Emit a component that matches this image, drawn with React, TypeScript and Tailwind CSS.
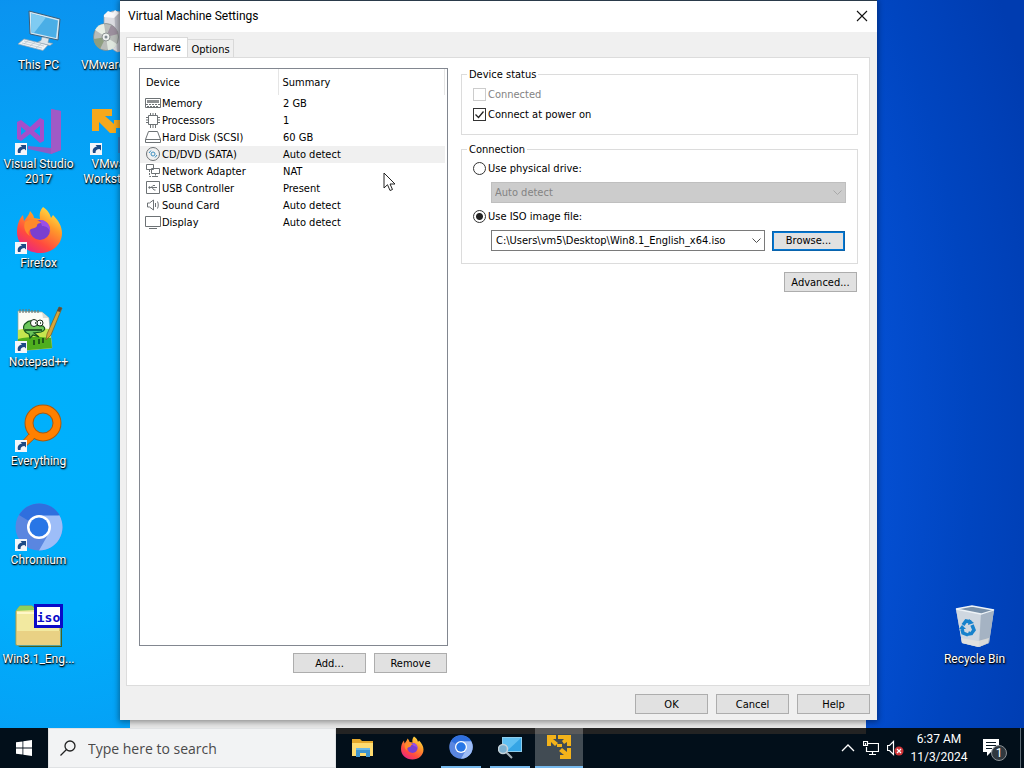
import { useState, type ReactNode } from "react";
import { clsx } from "clsx";

const ISO_PATH = "C:\\Users\\vm5\\Desktop\\Win8.1_English_x64.iso";

/* ---------- desktop and taskbar icons ---------- */

function Shortcut() {
  return (
    <g>
      <path d="M0 36h12v12H0z" fill="#f4f6fa" />
      <path d="M3 46c-1-4 1-6 4-6.500l-1.500-1.500H11v5.500L9.500 42C7 42 5.500 43 5.500 46z" fill="#1d4a86" />
    </g>
  );
}

function ThisPcIcon() {
  return (
    <svg viewBox="0 0 48 48" className="size-12">
      <path d="M14 3l31 8-2 21-28-6z" fill="#d6e8f2" />
      <path d="M14 3l31 8-2 21-28-6z" fill="none" stroke="#3c5d78" />
      <path d="M16 5.500l27 7-2 17.500-24.500-5.500z" fill="#4aaee6" />
      <path d="M16 5.500l15 4-12 15.500-2.500-.5z" fill="#7fcbf2" />
      <path d="M27 29l7 1.500-1 4 5 1-3 2-13-3 4-2z" fill="#dce6ec" stroke="#8295a3" strokeWidth=".6" />
      <path d="M9 31l24 6-5 5.500L3 36z" fill="#eef3f6" stroke="#93a5b1" strokeWidth=".7" />
      <path d="M9 33l20 5M7 35l20 5M14 32l-5 4M20 34l-5 4M26 36l-5 4" stroke="#b3c2cc" strokeWidth=".7" />
    </svg>
  );
}

function InstallerIcon() {
  return (
    <svg viewBox="0 0 48 48" className="size-12">
      <path d="M14 7l9-4 16 2v36l-12 3-13-8z" fill="#dcdde2" stroke="#9a9da6" strokeWidth=".7" />
      <path d="M24 3l15 2v36l-12 3z" fill="#b9bac3" />
      <path d="M14 7l4-4 5 2 2-3 4 3-5 5-10-1z" fill="#f8f8fa" />
      <ellipse cx="16" cy="29" rx="12.500" ry="13.500" fill="#b8bcb9" stroke="#7d8583" strokeWidth=".7" />
      <path d="M16 29L5 22c2-4 5-6 9-6z" fill="#e8eee4" />
      <path d="M16 29l11 7c-2 4-5 6-9 6z" fill="#dfe7df" />
      <path d="M16 29L4 31c0 5 3 8 6 10z" fill="#8e9e80" />
      <path d="M16 29l12-3c-1-5-4-8-7-9z" fill="#9b8f9d" />
      <circle cx="16" cy="29" r="4" fill="#eef1f0" stroke="#8d9492" />
      <circle cx="16" cy="29" r="1.500" fill="#7f8a90" />
    </svg>
  );
}

function VisualStudioIcon() {
  return (
    <svg viewBox="0 0 48 48" className="size-12">
      <path d="M36 2l10 2v39l-10 4-23-5v-3l23 2z" fill="#8a5cc6" />
      <path d="M36 2l10 2v39l-10 4z" fill="#a05ac6" />
      <path d="M2 15l4-2 9 7 10-9 4 2v21l-4 2-10-9-9 7-4-2zm4 5v8l5-4zm19-1l-6 5 6 5z" fill="#a44fcb" fillRule="evenodd" />
      <Shortcut />
    </svg>
  );
}

function WorkstationIcon() {
  return (
    <svg viewBox="0 0 48 48" className="size-12">
      <path d="M2 2h20v7h-7l9 8v-4h16v8H26v5h-6L9 15v9H2z" fill="#f5a81c" />
      <path d="M28 30h12v16H28z" fill="#2f80c8" />
      <Shortcut />
    </svg>
  );
}

function FirefoxArt() {
  return (
    <g>
      <defs>
        <linearGradient id="fox" x1=".85" y1="0" x2=".2" y2="1">
          <stop offset="0" stopColor="#fff04a" />
          <stop offset=".35" stopColor="#ff9a2a" />
          <stop offset=".7" stopColor="#ff4a3f" />
          <stop offset="1" stopColor="#e5208d" />
        </linearGradient>
      </defs>
      <path d="M28 1c5 3 7 7 8 11l2-3c5 5 9 11 9 18 0 12-10 20-22 20C12 47 2 38 2 26 2 19 4 13 8 9l1 6c3-4 5-6 6-10 2 2 4 5 4 7l6 1c-1-5 0-9 3-12z" fill="url(#fox)" />
      <circle cx="25" cy="24" r="10" fill="#7a3fd0" />
      <path d="M10 16c4-3 11-4 17 1-4 0-5 1-5 3-1 2-4 2-6 3-3 2-3 4-1 7-5-3-7-9-5-14z" fill="#ff8a2b" />
      <path d="M25 14c7 0 11 6 10 12-1-4-4-6-8-6z" fill="#9a4fe8" />
    </g>
  );
}

function FirefoxIcon() {
  return (
    <svg viewBox="0 0 48 48" className="size-12">
      <FirefoxArt />
      <Shortcut />
    </svg>
  );
}

function NotepadIcon() {
  return (
    <svg viewBox="0 0 48 48" className="size-12">
      <path d="M3 6l24 1 7 6 3 30-34 3z" fill="#fbfcf6" stroke="#93a394" strokeWidth=".7" />
      <path d="M27 7l1 6 6 0z" fill="#d9ddd6" />
      <path d="M3 25c12-3 23-2 32-1l2 19-34 3z" fill="#c6e64e" />
      <path d="M3 34c12-3 23-2 33-1l1 10-34 3z" fill="#4fae1e" />
      <path d="M5 4v4M8 4v4M11 4v4M14 4v4M17 5v3M20 5v3M23 5v3" stroke="#6f7b74" strokeWidth="1.200" />
      <path d="M11 18c4-4 9-2 9 2l8 1c3 2 2 5-2 6l-7 1 5 4-6-2-3 3-1-4c-6-2-7-8-3-11z" fill="#6cc65a" stroke="#14541a" strokeWidth="1.200" />
      <circle cx="19" cy="18" r="3.500" fill="#fff" stroke="#172a18" />
      <circle cx="25" cy="18" r="3" fill="#fff" stroke="#172a18" />
      <path d="M20 18h1M25 18h1M10 25h17M19 40v-5M24 39v-5M28 38v-5" stroke="#123c14" strokeWidth="1.500" />
      <path d="M44 2l3 1-11 27-5 5 1-6z" fill="#d6a63b" stroke="#755a20" strokeWidth=".7" />
      <path d="M44 2l3 1-2 4-3-1z" fill="#5a4a3e" />
      <Shortcut />
    </svg>
  );
}

function EverythingIcon() {
  return (
    <svg viewBox="0 0 48 48" className="size-12">
      <path d="M15 29L3 42l4 4 14-13z" fill="#ff8000" stroke="#a85a10" />
      <circle cx="28" cy="19" r="14" fill="none" stroke="#a85a10" strokeWidth="9" />
      <circle cx="28" cy="19" r="14" fill="none" stroke="#ff8000" strokeWidth="7" />
      <path d="M13 32l5-5 4 4-5 5z" fill="#ff8000" />
      <Shortcut />
    </svg>
  );
}

function ChromiumArt() {
  return (
    <g>
      <circle cx="24" cy="24" r="23.500" fill="#5a86e0" />
      <path d="M24 24L4 12a23.500 23.500 0 0 1 40.500 0z" fill="#2f6fde" />
      <path d="M24 12.500h20.500A23.500 23.500 0 0 1 24 47.500l10-17.500z" fill="#9dbdf8" />
      <circle cx="24" cy="24" r="12" fill="#fff" />
      <circle cx="24" cy="24" r="9.500" fill="#2876e6" />
    </g>
  );
}

function ChromiumIcon() {
  return (
    <svg viewBox="0 0 48 48" className="size-12">
      <ChromiumArt />
      <Shortcut />
    </svg>
  );
}

function IsoIcon() {
  return (
    <svg viewBox="0 0 48 48" className="size-12">
      <path d="M3 44h43v-27l1 1v27H5z" fill="#45601f" />
      <path d="M1 9l4-5h12l4 4h24v35H1z" fill="#f2e9a0" stroke="#b59b3c" />
      <path d="M1 9l4-5h12l3 4z" fill="#8fd05a" />
      <path d="M2 11h20" stroke="#fff7c8" strokeWidth="2" />
      <path d="M2 29h43v14H2z" fill="#e9d184" />
      <path d="M19 2h29v24H19z" fill="#0a0ac8" />
      <path d="M22 5h23v18H22z" fill="#fff" />
      <text x="33.500" y="20" textAnchor="middle" fontFamily="DejaVu Sans Mono, monospace" fontWeight="700" fontSize="13" fill="#0a0ac8">iso</text>
    </svg>
  );
}

function RecycleBinIcon() {
  return (
    <svg viewBox="0 0 48 48" className="size-12">
      <path d="M5 7l16-3 22 4-5 33-10 4-17-4z" fill="#c4ced8" />
      <path d="M5 7l25 5-3 33-16-4z" fill="#cfd7e0" />
      <path d="M30 12l13-4-5 33-10 4z" fill="#a5b3c3" />
      <path d="M5 7l16-3 22 4-13 4z" fill="#7990a8" stroke="#eef3f7" strokeWidth="1.300" />
      <path d="M10 36l17 3 11-3-1 5-9 4-17-4z" fill="#e6e3dd" opacity=".8" />
      <g fill="none" stroke="#1682cc" strokeWidth="3.500">
        <path d="M12 23l3-4 5 1M21 23l2 5-3 4M17 33l-5-2-1-4" />
      </g>
      <path d="M18 17l5 4-6 2zM22 33l-6 1 2-5zM8 27l3-4 4 4z" fill="#1682cc" />
    </svg>
  );
}

function FolderIcon() {
  return (
    <svg viewBox="0 0 24 24" className="size-6">
      <path d="M1 3h8l2 2h11v15H1z" fill="#e5a92c" />
      <path d="M1 7h21v13H1z" fill="#ffdc70" />
      <path d="M5 12h14v9h-4v-4H9v4H5z" fill="#3f95cf" />
      <path d="M5 12h14v2H5z" fill="#6cb9e6" />
    </svg>
  );
}

function MonitorSearchIcon() {
  return (
    <svg viewBox="0 0 24 24" className="size-6">
      <path d="M4 2h20v15H4z" fill="#8fcdec" />
      <path d="M5 3h18v13H5z" fill="#35a5e5" />
      <path d="M5 3h18L9 16H5z" fill="#60c0f2" />
      <path d="M8 17l6 6" stroke="#a5b2ba" strokeWidth="2" />
      <circle cx="5" cy="14" r="4.500" fill="#7cb0cf" stroke="#c5d2da" strokeWidth="1.500" />
    </svg>
  );
}

function VmwareIcon() {
  return (
    <svg viewBox="0 0 26 26" className="size-[26px]">
      <g fill="#f3b21a">
        <path d="M1 1h9v4H7l5 4-3 3-4-4v4H1z" />
        <path d="M12 1h13v11h-4V8l-3 2-2-3 2-2h-6z" />
        <path d="M25 25H14v-4h4l-5-4 3-3 5 4v-4h4z" />
        <path d="M11 10h5v3h-5z" />
      </g>
    </svg>
  );
}

/* ---------- device list icons ---------- */

const deviceIcons: Record<string, ReactNode> = {
  Memory: (
    <>
      <path d="M.5 2.500h15v9H.5z" />
      <path d="M2 5.500h12" strokeWidth="3" stroke="#8d9092" />
      <path d="M1 8.500h14M2 10.500h12" strokeDasharray="2 1" />
    </>
  ),
  Processors: (
    <>
      <path d="M3.500 2.500h9v9h-9z" />
      <path d="M5.500 0v2M8 0v2M10.500 0v2M5.500 12v3M8 12v3M10.500 12v3M1 4.500h2M1 7h2M1 9.500h2M13 4.500h2M13 7h2M13 9.500h2" />
    </>
  ),
  "Hard Disk (SCSI)": <path d="M3.500 1.500h9l3 8v3H.500v-3zM.500 9.500h15" />,
  "CD/DVD (SATA)": (
    <>
      <circle cx="8" cy="7" r="6.500" />
      <circle cx="8" cy="7" r="2" stroke="#3b8fc0" />
      <path d="M4 6l2-2.500M10 10.500l2-2.500" stroke="#3b8fc0" />
    </>
  ),
  "Network Adapter": (
    <>
      <path d="M1.500.500h7v5h-7zM6.500 4.500h8v5h-8zM10.500 9.500v2M8 12.500h5" />
      <path d="M4.500 6v6.500H8" strokeDasharray="2 1" />
    </>
  ),
  "USB Controller": (
    <>
      <path d="M1.500.500h13v12h-13z" />
      <path d="M4 6.500h8M6 6.500l2-2h2M7 6.500l2 2.500h1.500" />
      <circle cx="4.500" cy="6.500" r=".8" />
    </>
  ),
  "Sound Card": <path d="M2.500 5v4h2l4 3V2l-4 3zM10.500 5v4M12.500 3.500c1 2 1 5 0 7" />,
  Display: <path d="M.500 1.500h15v10H.500zM4 13.500h8" />,
};

const devices = [
  ["Memory", "2 GB"],
  ["Processors", "1"],
  ["Hard Disk (SCSI)", "60 GB"],
  ["CD/DVD (SATA)", "Auto detect"],
  ["Network Adapter", "NAT"],
  ["USB Controller", "Present"],
  ["Sound Card", "Auto detect"],
  ["Display", "Auto detect"],
];

const shortcuts: { label: string; icon: ReactNode }[] = [
  { label: "This PC", icon: <ThisPcIcon /> },
  { label: "Visual Studio 2017", icon: <VisualStudioIcon /> },
  { label: "Firefox", icon: <FirefoxIcon /> },
  { label: "Notepad++", icon: <NotepadIcon /> },
  { label: "Everything", icon: <EverythingIcon /> },
  { label: "Chromium", icon: <ChromiumIcon /> },
  { label: "Win8.1_Eng...", icon: <IsoIcon /> },
  { label: "VMware-w...", icon: <InstallerIcon /> },
  { label: "VMware Workstati...", icon: <WorkstationIcon /> },
];

function DesktopIcon({ label, icon }: { label: string; icon: ReactNode }) {
  return (
    <button type="button" className="flex h-full w-full flex-col items-center gap-0.5 pt-2">
      {icon}
      <span className="text-center text-[12px] leading-[15px] text-white [text-shadow:1px_1px_2px_#000,0_1px_1px_#000]">
        {label}
      </span>
    </button>
  );
}

function DialogButton({ children, focused }: { children: ReactNode; focused?: boolean }) {
  return (
    <button
      type="button"
      className={clsx(
        "flex h-5 w-[73px] shrink-0 items-center justify-center border bg-[#e1e1e1] pt-0.5",
        focused ? "border-[#0a64ad] outline-1 -outline-offset-2 outline-[#0078d7]" : "border-[#adadad]"
      )}
    >
      {children}
    </button>
  );
}

function Combo({ label, value, disabled }: { label: string; value: string; disabled?: boolean }) {
  return (
    <div className="relative min-w-0 flex-1">
      <select
        aria-label={label}
        disabled={disabled}
        className={clsx(
          "block h-[21px] w-full appearance-none border pt-0.5 pr-5 opacity-100 outline-none",
          disabled ? "border-[#bfbfbf] bg-[#cccccc] pl-[3px] text-[#838383]" : "border-[#7a7a7a] bg-white pl-1"
        )}
      >
        <option>{value}</option>
      </select>
      <svg viewBox="0 0 9 5" className="pointer-events-none absolute top-2 right-1 h-[5px] w-[9px]">
        <path d="M.500.500l4 4 4-4" fill="none" stroke={disabled ? "#a8a8a8" : "#505050"} />
      </svg>
    </div>
  );
}

function Radio({ label, checked, onChange }: { label: string; checked: boolean; onChange: () => void }) {
  return (
    <label className="flex items-center gap-0.5 leading-[15px]">
      <input
        type="radio"
        name="connection"
        checked={checked}
        onChange={onChange}
        className="size-[13px] appearance-none rounded-full border border-[#333] bg-white checked:bg-[radial-gradient(circle,#222_0_3px,#fff_4px)]"
      />
      {label}
    </label>
  );
}

function Checkbox({ label, defaultChecked, disabled }: { label: string; defaultChecked?: boolean; disabled?: boolean }) {
  return (
    <label className={clsx("flex items-center gap-0.5 leading-[15px]", disabled && "text-[#838383]")}>
      <span className="grid size-[13px]">
        <input
          type="checkbox"
          defaultChecked={defaultChecked}
          disabled={disabled}
          className="peer col-start-1 row-start-1 size-[13px] appearance-none border border-[#333] bg-white disabled:border-[#cccccc]"
        />
        <svg viewBox="0 0 13 13" className="pointer-events-none invisible col-start-1 row-start-1 size-[13px] peer-checked:visible">
          <path d="M2.500 6.500l3 3 5-6" fill="none" stroke="#222" strokeWidth="1.300" />
        </svg>
      </span>
      {label}
    </label>
  );
}

function SettingsDialog() {
  const [selected, setSelected] = useState("CD/DVD (SATA)");
  const [useIso, setUseIso] = useState(true);

  return (
    <section
      aria-label="Virtual Machine Settings"
      className="absolute top-0 right-[147px] bottom-2 left-[120px] flex flex-col border-t border-[#2a3a4a] bg-[#f0f0f0] font-['DejaVu_Sans_Condensed','DejaVu_Sans',sans-serif] text-[11px] text-black shadow-[0_1px_6px_1px_rgba(0,0,0,0.4)]"
    >
      <header className="flex h-[31px] shrink-0 items-center justify-between bg-white pr-[9px] pb-0.5 pl-2 font-['Roboto','Open_Sans',sans-serif] text-[12px]">
        <h1>Virtual Machine Settings</h1>
        <button type="button" aria-label="Close">
          <svg viewBox="0 0 12 12" className="size-3">
            <path d="M1 1l10 10M11 1L1 11" stroke="#111" strokeWidth="1.100" />
          </svg>
        </button>
      </header>

      <div className="flex min-h-0 flex-1 flex-col pt-[5px] pr-[7px] pl-1.5">
        <div role="tablist" className="flex items-end">
          <button role="tab" aria-selected="true" type="button" className="-mb-px h-[21px] w-[62px] border border-b-0 border-[#d9d9d9] bg-white">
            Hardware
          </button>
          <button role="tab" aria-selected="false" type="button" className="h-[18px] w-[46px] border border-b-0 border-l-0 border-[#d9d9d9] bg-[#f0f0f0] pt-0.5">
            Options
          </button>
        </div>

        <div className="flex min-h-0 flex-1 gap-[13px] border border-[#dcdcdc] bg-white pt-[10px] pr-[11px] pb-3 pl-3">
          <div className="flex w-[309px] shrink-0 flex-col gap-[7px]">
            <div className="min-h-0 flex-1 border border-[#828790] bg-white pr-0.5">
              <table className="w-full table-fixed border-collapse text-left">
                <thead>
                  <tr className="h-[26px]">
                    <th className="w-[138px] border-r border-[#e5e5e5] pt-0.5 pl-1.5 font-normal">Device</th>
                    <th className="border-r border-[#e5e5e5] pt-0.5 pl-1 font-normal">Summary</th>
                  </tr>
                </thead>
                <tbody>
                  {devices.map(([name, summary]) => (
                    <tr
                      key={name}
                      onClick={() => setSelected(name)}
                      className={clsx("h-[17px] leading-[15px]", selected === name && "bg-[#f0f0f0]")}
                    >
                      <td className="p-0 pl-[5px]">
                        <span className="flex items-center gap-px whitespace-nowrap">
                          <svg viewBox="0 0 16 15" className="h-[15px] w-4 shrink-0" fill="none" stroke="#6d7275">
                            {deviceIcons[name]}
                          </svg>
                          {name}
                        </span>
                      </td>
                      <td className="p-0 pl-[5px]">{summary}</td>
                    </tr>
                  ))}
                </tbody>
              </table>
            </div>
            <div className="flex justify-end gap-2 pr-px">
              <DialogButton>Add...</DialogButton>
              <DialogButton>Remove</DialogButton>
            </div>
          </div>

          <div className="flex min-w-0 flex-1 flex-col">
            <fieldset className="border border-[#dcdcdc] pr-3 pb-3 pl-[11px]">
              <legend className="-ml-1.5 px-0.5 leading-[13px]">Device status</legend>
              <div className="flex flex-col gap-[5px] pt-1.5">
                <Checkbox label="Connected" disabled />
                <Checkbox label="Connect at power on" defaultChecked />
              </div>
            </fieldset>

            <fieldset className="mt-2 border border-[#dcdcdc] pr-[11px] pb-3 pl-[11px]">
              <legend className="-ml-1.5 px-0.5 leading-[13px]">Connection</legend>
              <div className="flex flex-col gap-[6px] pt-[5px]">
                <Radio label="Use physical drive:" checked={!useIso} onChange={() => setUseIso(false)} />
                <div className="flex pl-[18px]">
                  <Combo label="Physical drive" value="Auto detect" disabled />
                </div>
                <Radio label="Use ISO image file:" checked={useIso} onChange={() => setUseIso(true)} />
                <div className="flex items-center gap-[7px] pr-px pl-[18px]">
                  <Combo label="ISO image file" value={ISO_PATH} />
                  <DialogButton focused>Browse...</DialogButton>
                </div>
              </div>
            </fieldset>

            <div className="mt-2 flex justify-end pr-px">
              <DialogButton>Advanced...</DialogButton>
            </div>
          </div>
        </div>

        <footer className="flex justify-end gap-2 pt-2 pb-1.5">
          <DialogButton>OK</DialogButton>
          <DialogButton>Cancel</DialogButton>
          <DialogButton>Help</DialogButton>
        </footer>
      </div>
    </section>
  );
}

function TaskButton({ label, open, active, children }: { label: string; open?: boolean; active?: boolean; children: ReactNode }) {
  return (
    <button
      type="button"
      aria-label={label}
      className={clsx("flex h-full w-12 flex-col items-center", active && "bg-white/25")}
    >
      <span className="flex flex-1 items-center">{children}</span>
      {(open || active) && <span className={clsx("h-0.5 bg-[#76b9ed]", active ? "w-full" : "w-10")} />}
    </button>
  );
}

function Taskbar() {
  return (
    <footer className="relative flex h-10 shrink-0 bg-[#020f1a] text-white">
      <div className="absolute top-0 right-[158px] left-[336px] h-[6px] bg-[#232323]" />
      <button type="button" aria-label="Start" className="grid w-12 shrink-0 place-items-center">
        <svg viewBox="0 0 16 16" className="size-4" fill="#fff">
          <path d="M0 2.300l6.500-.9v6.200H0zM7.300 1.300L16 0v7.600H7.300zM0 8.400h6.500v6.200L0 13.700zM7.300 8.400H16V16l-8.700-1.300z" />
        </svg>
      </button>
      <label className="flex w-72 shrink-0 items-center gap-3 border border-[#e0e2e4] bg-[#f2f3f4] pl-[11px]">
        <svg viewBox="0 0 16 16" className="size-4 shrink-0" fill="none" stroke="#222" strokeWidth="1.300">
          <circle cx="10" cy="6" r="5" />
          <path d="M6.500 9.500L.500 15.500" />
        </svg>
        <input
          type="text"
          aria-label="Search"
          placeholder="Type here to search"
          className="w-full min-w-0 bg-transparent font-['Open_Sans','Noto_Sans',sans-serif] text-[14px] text-black outline-none placeholder:text-[#4a4a4a]"
        />
      </label>
      <nav className="relative ml-[3px] flex gap-px">
        <TaskButton label="File Explorer">
          <FolderIcon />
        </TaskButton>
        <TaskButton label="Firefox">
          <svg viewBox="0 0 48 48" className="size-6">
            <FirefoxArt />
          </svg>
        </TaskButton>
        <TaskButton label="Chromium" open>
          <svg viewBox="0 0 48 48" className="size-6">
            <ChromiumArt />
          </svg>
        </TaskButton>
        <TaskButton label="Remote Viewer" open>
          <MonitorSearchIcon />
        </TaskButton>
        <TaskButton label="VMware Workstation" active>
          <VmwareIcon />
        </TaskButton>
      </nav>

      <div className="relative ml-auto flex items-center">
        <button type="button" aria-label="Show hidden icons" className="mr-2">
          <svg viewBox="0 0 14 8" className="h-2 w-[14px]" fill="none" stroke="#fff" strokeWidth="1.300">
            <path d="M1 7l6-6 6 6" />
          </svg>
        </button>
        <button type="button" aria-label="Network" className="mr-2">
          <svg viewBox="0 0 16 16" className="size-4" fill="none" stroke="#fff" strokeWidth="1.200">
            <path d="M5 3.500h10.500v8H3.500V7M9.500 11.500v3M6 14.500h7M.500 1.500h4v4h-4zM2.500 3v2" />
          </svg>
        </button>
        <button type="button" aria-label="Volume muted" className="mr-1">
          <svg viewBox="0 0 17 16" className="h-4 w-[17px]" fill="none">
            <path d="M.500 5.500v5h2l4 4v-13l-4 4z" stroke="#fff" strokeWidth="1.200" />
            <circle cx="12" cy="11" r="4.500" fill="#d13438" />
            <path d="M10 9l4 4M14 9l-4 4" stroke="#fff" strokeWidth="1.200" />
          </svg>
        </button>
        <time className="w-[62px] text-center text-[12px] leading-[18px]">
          6:37 AM
          <br />
          11/3/2024
        </time>
        <button type="button" aria-label="1 new notification" className="mr-[13px] ml-3">
          <svg viewBox="0 0 25 26" className="h-[26px] w-[25px]">
            <path d="M1 4h16v13H9l-4 4v-4H1z" fill="#fff" />
            <path d="M4 7.500h10M4 10.500h10M4 13.500h6" stroke="#0a1a26" />
            <circle cx="17" cy="18" r="7.500" fill="#30383f" stroke="#8b9196" />
            <text x="17" y="22" textAnchor="middle" fontSize="12" fill="#fff">1</text>
          </svg>
        </button>
        <button type="button" aria-label="Show desktop" className="h-full w-1 border-l border-[#5c6a74]" />
      </div>
    </footer>
  );
}

export default function App() {
  return (
    <div className="flex min-h-screen flex-col overflow-hidden font-['Roboto','Open_Sans',sans-serif]">
      <main className="relative flex flex-1 justify-between bg-[radial-gradient(100%_160%_at_5%_60%,#00b0fc_0%,#00aefc_15%,#0a94f0_37%,#0070e8_60%,#044fd2_81%,#0045c0_90%,#003cb0_100%)] pr-3 pl-px">
        <div className="grid auto-cols-[75px] grid-flow-col grid-rows-[repeat(7,99px)]">
          {shortcuts.map((s) => (
            <DesktopIcon key={s.label} {...s} />
          ))}
        </div>
        <div className="flex w-[75px] flex-col justify-end pb-[35px]">
          <div className="h-[99px]">
            <DesktopIcon label="Recycle Bin" icon={<RecycleBinIcon />} />
          </div>
        </div>

        {/* bottom edge of the main window, just peeking out under the dialog */}
        <div className="absolute right-[158px] bottom-0 left-[130px] h-3 bg-[#e8e8e8]" />
        <SettingsDialog />

        <svg viewBox="0 0 13 20" className="pointer-events-none absolute top-[172px] left-[383px] h-5 w-[13px]">
          <path d="M1 1v15l3.500-3.300L7 18.500l2.500-1L7 12h5z" fill="#fff" stroke="#222" />
        </svg>
      </main>
      <Taskbar />
    </div>
  );
}
